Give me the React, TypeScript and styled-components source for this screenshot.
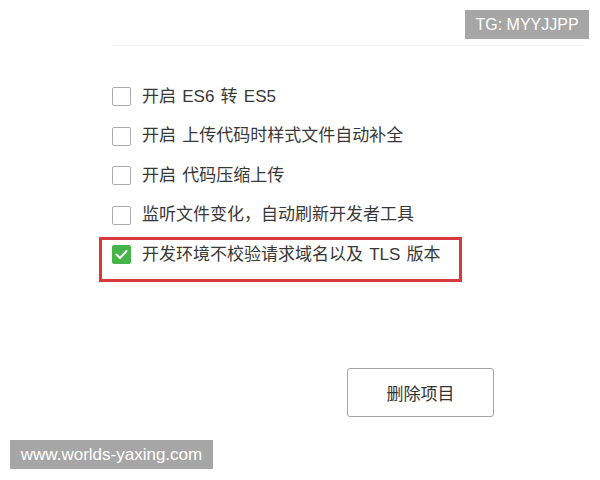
import React from "react";
import styled, { createGlobalStyle, css } from "styled-components";

const Global = createGlobalStyle`
  html, body { margin: 0; padding: 0; background: #fff; }
  body { font-family: "Liberation Sans", "Noto Sans CJK SC", Arial, sans-serif; }
`;

const Page = styled.div`
  position: relative;
  width: 600px;
  height: 480px;
  overflow: hidden;
  background: #fff;
`;

const Content = styled.div`
  display: flex;
  flex-direction: column;
  margin-left: 112px;
  width: 471px;
`;

const Header = styled.div`
  height: 45px;
  border-bottom: 1px solid #efefef;
`;

const List = styled.ul`
  list-style: none;
  margin: 31px 0 0;
  padding: 0;
  display: flex;
  flex-direction: column;
`;

const Row = styled.li<{ $highlight?: boolean }>`
  position: relative;
  height: 39.5px;
  display: flex;
  align-items: center;
  gap: 11px;
  font-size: 17px;
  color: #383838;
  ${(p) =>
    p.$highlight &&
    css`
      &::after {
        content: "";
        position: absolute;
        left: -13px;
        top: 2px;
        width: 357px;
        height: 39px;
        border: 3px solid #d8393d;
        pointer-events: none;
      }
    `}
`;

const Box = styled.span<{ $checked?: boolean }>`
  box-sizing: border-box;
  width: 19px;
  height: 19px;
  flex: none;
  border-radius: 2px;
  display: flex;
  align-items: center;
  justify-content: center;
  ${(p) =>
    p.$checked
      ? css`
          background: #45b449;
          border: 1px solid #45b449;
        `
      : css`
          background: #fff;
          border: 1px solid #ababab;
        `}
`;

const Label = styled.span`
  white-space: pre;
  line-height: 20px;
  word-spacing: 1.5px;
`;

const Footer = styled.div`
  display: flex;
  margin-top: 93px;
  padding-left: 235px;
`;

const Button = styled.button`
  box-sizing: border-box;
  width: 147px;
  height: 49px;
  border: 1px solid #a6a6a6;
  border-radius: 3px;
  background: #fff;
  color: #333;
  font-family: "Liberation Sans", "Noto Sans CJK SC", sans-serif;
  font-size: 17px;
  padding: 0;
  cursor: pointer;
`;

const Watermark = styled.div<{ $pos: "top" | "bottom" }>`
  position: absolute;
  background: #a6a6a6;
  color: #fff;
  display: flex;
  align-items: center;
  justify-content: center;
  height: 29px;
  font-family: "Liberation Sans", Arial, sans-serif;
  ${(p) =>
    p.$pos === "top"
      ? css`
          top: 10px;
          left: 465px;
          width: 124px;
          font-size: 16px;
        `
      : css`
          top: 440px;
          left: 10px;
          width: 203px;
          font-size: 17px;
        `}
`;

const Check = () => (
  <svg width="13" height="11" viewBox="0 0 13 11" fill="none">
    <path d="M1.5 5.5 L5 9 L11.5 2" stroke="#fff" strokeWidth="2" strokeLinecap="round" strokeLinejoin="round" />
  </svg>
);

const items = [
  { text: "开启 ES6 转 ES5", checked: false },
  { text: "开启 上传代码时样式文件自动补全", checked: false },
  { text: "开启 代码压缩上传", checked: false },
  { text: "监听文件变化，自动刷新开发者工具", checked: false },
  { text: "开发环境不校验请求域名以及 TLS 版本", checked: true },
];

export default function App() {
  return (
    <Page>
      <Global />
      <Content>
        <Header />
        <List>
          {items.map((it) => (
            <Row key={it.text} $highlight={it.checked}>
              <Box $checked={it.checked}>{it.checked && <Check />}</Box>
              <Label>{it.text}</Label>
            </Row>
          ))}
        </List>
        <Footer>
          <Button>删除项目</Button>
        </Footer>
      </Content>
      <Watermark $pos="top">TG: MYYJJPP</Watermark>
      <Watermark $pos="bottom">www.worlds-yaxing.com</Watermark>
    </Page>
  );
}
